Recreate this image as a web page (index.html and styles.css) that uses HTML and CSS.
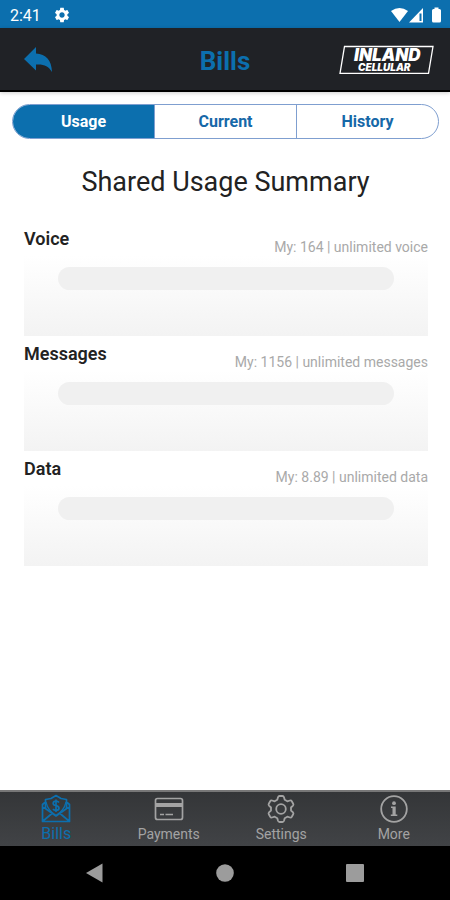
FILE: index.html
```
<!DOCTYPE html>
<html lang="en">
<head>
    <meta charset="UTF-8">
    <meta name="viewport" content="width=device-width, initial-scale=1">
    <title>Bills</title>
    <link rel="stylesheet" href="styles.css">
</head>
<body>
    <div class="status-bar">
        <span class="clock">2:41</span>
        <svg class="status-gear" width="18" height="18" viewBox="0 0 24 24"><path fill="#fff" d="M19.14 12.94c.04-.3.06-.61.06-.94 0-.32-.02-.64-.07-.94l2.03-1.58c.18-.14.23-.41.12-.61l-1.92-3.32c-.12-.22-.37-.29-.59-.22l-2.39.96c-.5-.38-1.03-.7-1.62-.94l-.36-2.54c-.04-.24-.24-.41-.48-.41h-3.84c-.24 0-.43.17-.47.41l-.36 2.54c-.59.24-1.13.57-1.62.94l-2.39-.96c-.22-.08-.47 0-.59.22L2.74 8.87c-.12.21-.08.47.12.61l2.03 1.58c-.05.3-.09.63-.09.94s.02.64.07.94l-2.03 1.58c-.18.14-.23.41-.12.61l1.92 3.32c.12.22.37.29.59.22l2.39-.96c.5.38 1.03.7 1.62.94l.36 2.54c.05.24.24.41.48.41h3.84c.24 0 .44-.17.47-.41l.36-2.54c.59-.24 1.13-.56 1.62-.94l2.39.96c.22.08.47 0 .59-.22l1.92-3.32c.12-.22.07-.47-.12-.61l-2.01-1.58zM12 15.6c-1.98 0-3.6-1.62-3.6-3.6s1.62-3.6 3.6-3.6 3.6 1.62 3.6 3.6-1.62 3.6-3.6 3.6z"/></svg>
        <svg class="status-icons" width="52" height="16" viewBox="0 0 52 16">
            <path fill="#fff" d="M1 4Q9.500 -2 18 4L9.500 15Z"/>
            <path fill="#fff" d="M33 1V15.500H19ZM31.500 6.500H29.500V14H31.500Z" fill-rule="evenodd"/>
            <path fill="#fff" d="M44.500 2V.500h4V2h1q1.500 0 1.500 1.500v10.500q0 1.500-1.500 1.500h-6q-1.500 0-1.500-1.500V3.500q0-1.500 1.500-1.500z"/>
        </svg>
    </div>

    <header class="header">
        <button type="button" class="back" aria-label="Back">
            <svg width="28" height="25" viewBox="0 0 28 25"><path fill="#0c6fae" d="M0 12L12 0v6.500C22 7 27.500 13 28 25 24.500 19 20 17 12 17.500V23.500Z"/></svg>
        </button>
        <h1>Bills</h1>
        <svg class="logo" width="96" height="30" viewBox="0 0 96 30" role="img" aria-label="Inland Cellular">
            <path fill="none" stroke="#fff" stroke-width="1.300" d="M6.500 2.500H95L90.500 29.300H2Z"/>
            <text x="16" y="17" class="logo-top">INLAND</text>
            <text x="20" y="27" class="logo-bottom">CELLULAR</text>
        </svg>
    </header>

    <main class="content">
        <nav class="segments">
            <button type="button" class="segment active">Usage</button>
            <button type="button" class="segment">Current</button>
            <button type="button" class="segment">History</button>
        </nav>

        <h2>Shared Usage Summary</h2>

        <section class="usage">
            <div class="usage-head">
                <label for="voice">Voice</label>
                <span class="amount">My: 164 | unlimited voice</span>
            </div>
            <progress id="voice" value="0" max="100"></progress>
        </section>
        <section class="usage">
            <div class="usage-head">
                <label for="messages">Messages</label>
                <span class="amount">My: 1156 | unlimited messages</span>
            </div>
            <progress id="messages" value="0" max="100"></progress>
        </section>
        <section class="usage">
            <div class="usage-head">
                <label for="data">Data</label>
                <span class="amount">My: 8.89 | unlimited data</span>
            </div>
            <progress id="data" value="0" max="100"></progress>
        </section>
    </main>

    <nav class="tabs">
        <a href="#bills" class="tab active">
            <svg width="30" height="30" viewBox="0 0 30 30" fill="none" stroke="currentColor" stroke-width="1.700" stroke-linejoin="round">
                <path d="M4.500 8L1.500 10.500V27.500H28.500V10.500L25.500 8M4.500 14V5.500L10 4.500 15 1.500 20 4.500 25.500 5.500V14M1.500 12.500L15 22 28.500 12.500M2 27L11 19.500M28 27L19 19.500"/>
                <path d="M5 8Q7 17 15 21.500 23 17 25 8" stroke-width="1.200"/>
                <path d="M18 8.500Q17 7.200 15 7.200 12.200 7.200 12.200 9.500 12.200 11.200 15 11.700 18 12.300 18 14.300 18 16.300 15 16.300 12.800 16.300 12 15M15 5.500V18"/>
            </svg>
            <span>Bills</span>
        </a>
        <a href="#payments" class="tab">
            <svg width="30" height="30" viewBox="0 0 30 30" fill="none" stroke="currentColor" stroke-width="1.700">
                <rect x="1.500" y="4.500" width="27" height="21" rx="2"/>
                <path d="M1.500 11H28.500" stroke-width="4"/>
                <path d="M6 20.500H10M11.500 20.500H19" stroke-width="1.500"/>
            </svg>
            <span>Payments</span>
        </a>
        <a href="#settings" class="tab">
            <svg width="30" height="30" viewBox="0 0 30 30" fill="none" stroke="currentColor" stroke-width="1.800" stroke-linejoin="round">
                <path d="M13.500 2H16.500Q17.600 2 18 3.200L18.700 5.800 21.300 7.300 24 6.500Q25.200 6.200 25.800 7.200L27.200 9.700Q27.800 10.800 27 11.600L25 13.500V16.500L27 18.400Q27.800 19.200 27.200 20.300L25.800 22.800Q25.200 23.800 24 23.500L21.300 22.700 18.700 24.200 18 26.800Q17.600 28 16.500 28H13.500Q12.400 28 12 26.800L11.300 24.200 8.700 22.700 6 23.500Q4.800 23.800 4.200 22.800L2.800 20.300Q2.200 19.200 3 18.400L5 16.500V13.500L3 11.600Q2.200 10.800 2.800 9.700L4.200 7.200Q4.800 6.200 6 6.500L8.700 7.300 11.300 5.800 12 3.200Q12.400 2 13.500 2Z"/>
                <circle cx="15" cy="15" r="4.800"/>
            </svg>
            <span>Settings</span>
        </a>
        <a href="#more" class="tab">
            <svg width="30" height="30" viewBox="0 0 30 30" fill="none" stroke="currentColor">
                <circle cx="15" cy="15" r="12.800" stroke-width="1.800"/>
                <circle cx="15" cy="9.200" r="1.900" fill="currentColor" stroke="none"/>
                <path fill="currentColor" stroke="none" d="M12 12.500H16.700V20.500H18.300V22H11.800V20.500H13.500V14H12Z"/>
            </svg>
            <span>More</span>
        </a>
    </nav>

    <div class="system-nav">
        <button type="button" aria-label="Back"><svg width="20" height="20" viewBox="0 0 20 20"><path fill="#9c9c9c" d="M1 10L17.500 .500V19.500Z"/></svg></button>
        <button type="button" aria-label="Home"><svg width="20" height="20" viewBox="0 0 20 20"><circle cx="10" cy="10" r="8.800" fill="#9c9c9c"/></svg></button>
        <button type="button" aria-label="Recent apps"><svg width="20" height="20" viewBox="0 0 20 20"><rect x="1" y="1" width="18" height="18" rx="1" fill="#9c9c9c"/></svg></button>
    </div>
</body>
</html>
```
FILE: styles.css
```
* {
    box-sizing: border-box;
}

body {
    margin: 0;
    min-height: 100vh;
    display: flex;
    flex-direction: column;
    background: #fff;
    color: #222;
    font-family: Roboto, "Liberation Sans", sans-serif;
}

button {
    font-family: inherit;
    border: 0;
    padding: 0;
    background: none;
    cursor: pointer;
}

svg {
    display: block;
}

.status-bar {
    display: flex;
    align-items: center;
    height: 28px;
    padding: 2px 8px 0 10px;
    background: #0c6fae;
    color: #fff;
    font-size: 16px;
}

.status-gear {
    margin-left: 12px;
}

.status-icons {
    margin-left: auto;
}

.header {
    display: grid;
    grid-template-columns: 1fr auto 1fr;
    align-items: center;
    height: 64px;
    padding: 0 16px;
    background: #202226;
    border-bottom: 2px solid #000;
    box-shadow: 0 1px 4px rgba(0, 0, 0, 0.2);
}

.back {
    justify-self: start;
    padding-left: 8px;
}

.header h1 {
    margin: 0;
    padding-top: 4px;
    color: #0c6fae;
    font-size: 26px;
    font-weight: 700;
}

.logo {
    justify-self: end;
}

.logo-top,
.logo-bottom {
    fill: #fff;
    font-family: Inter, sans-serif;
    font-style: italic;
    font-weight: 900;
}

.logo-top {
    font-size: 17px;
}

.logo-bottom {
    font-size: 10px;
}

.content {
    flex: 1;
    padding: 12px 11px 12px 12px;
}

.segments {
    display: flex;
    height: 35px;
    border: 1px solid #7f9fd0;
    border-radius: 18px;
    overflow: hidden;
}

.segment {
    flex: 1;
    color: #1668a8;
    font-size: 16px;
    font-weight: 700;
}

.segment + .segment {
    border-left: 1px solid #7f9fd0;
}

.segment.active {
    background: #0c6fae;
    color: #fff;
}

h2 {
    margin: 25px 0 21px;
    text-align: center;
    font-size: 27px;
    font-weight: 400;
    line-height: 36px;
}

.usage {
    height: 115px;
    margin: 0 11px 0 12px;
    background: linear-gradient(#fff 30%, #f3f3f3);
}

.usage-head {
    display: flex;
    justify-content: space-between;
    height: 46px;
}

.usage label {
    padding-top: 8px;
    font-size: 18px;
    font-weight: 600;
    line-height: 20px;
}

.amount {
    padding-top: 18px;
    color: #a9a9a9;
    font-size: 14px;
    line-height: 16px;
}

progress {
    display: block;
    width: 83%;
    height: 23px;
    margin: 0 auto;
    appearance: none;
    border: 0;
    border-radius: 12px;
    overflow: hidden;
    background: #f0f0f0;
}

progress::-webkit-progress-bar {
    background: #f0f0f0;
}

.tabs {
    display: flex;
    height: 56px;
    padding-top: 2px;
    border-top: 2px solid #777;
    background: linear-gradient(#343638, #414346);
}

.tab {
    flex: 1;
    display: flex;
    flex-direction: column;
    align-items: center;
    color: #a3a3a3;
    font-size: 14px;
    line-height: 20px;
    text-decoration: none;
}

.tab.active {
    color: #0c6fae;
    font-size: 16px;
}

.system-nav {
    display: flex;
    justify-content: space-around;
    align-items: center;
    height: 54px;
    padding: 0 30px;
    background: #000;
}
```
